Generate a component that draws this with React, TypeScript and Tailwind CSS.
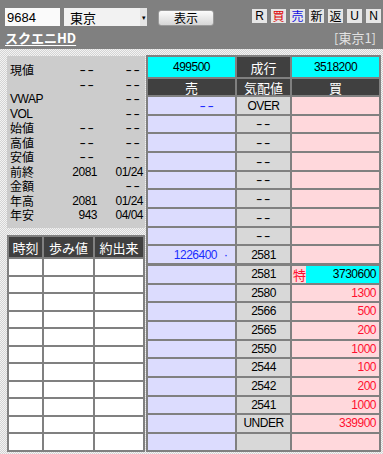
const info: [string, string, string][] = [
  ["現値", "--", "--"],
  ["", "--", "--"],
  ["VWAP", "", "--"],
  ["VOL", "", "--"],
  ["始値", "--", "--"],
  ["高値", "--", "--"],
  ["安値", "--", "--"],
  ["前終", "2081", "01/24"],
  ["金額", "", "--"],
  ["年高", "2081", "01/24"],
  ["年安", "943", "04/04"],
];

type Row = { sell?: string; mark?: boolean; price?: string; buy?: string; special?: boolean };

const book: Row[] = [
  { sell: "--", price: "OVER" },
  { price: "--" },
  { price: "--" },
  { price: "--" },
  { price: "--" },
  { price: "--" },
  { price: "--" },
  { price: "--" },
  { sell: "1226400", mark: true, price: "2581" },
  { price: "2581", buy: "3730600", special: true },
  { price: "2580", buy: "1300" },
  { price: "2566", buy: "500" },
  { price: "2565", buy: "200" },
  { price: "2550", buy: "1000" },
  { price: "2544", buy: "100" },
  { price: "2542", buy: "200" },
  { price: "2541", buy: "1000" },
  { price: "UNDER", buy: "339900" },
  {},
];

const jp = "font-['Noto_Sans_CJK_JP',sans-serif]";

function Val({ v, right }: { v: string; right?: boolean }) {
  if (v === "--") {
    return (
      <span
        className={`inline-block scale-x-[1.6] tracking-[1px] ${right ? "origin-right pr-[1px]" : "origin-center"}`}
      >
        --
      </span>
    );
  }
  return <span className="tracking-[-0.5px]">{v}</span>;
}

export default function App() {
  return (
    <div className="h-[454px] w-[383px] overflow-hidden bg-[repeating-conic-gradient(#d4d4d4_0%_25%,#f3f3f3_0%_50%)] bg-size-[2px_2px] font-['Liberation_Sans','Noto_Sans_CJK_JP',sans-serif] text-[12px] leading-none text-black">
      <header className="h-[49px] bg-[#808080] pl-[5px] pr-[2px] pt-[8px]">
        <div className="flex items-start">
          <div className="flex h-[18px] w-[55px] items-center bg-[#fafafa] pl-[2px] text-[13px]">9684</div>
          <div className="ml-[4px] flex h-[18px] w-[83px] items-center bg-[#f2f2f2]">
            <span className={`${jp} flex-1 pl-[6px] text-[13px] leading-none`}>東京</span>
            <span className="flex h-[18px] w-[7px] items-center justify-center bg-[#e4e4e4] text-[7px] leading-none">▾</span>
          </div>
          <button className={`${jp} ml-[11px] mt-[2px] h-[16px] w-[56px] rounded-[3px] border border-[#9a9a9a] bg-linear-to-b from-[#fcfcfc] to-[#d6d6d6] text-[12px] leading-none`}>
            表示
          </button>
          <div className={`${jp} ml-auto mt-[1px] flex gap-[4px] text-[12px] leading-none`}>
            {[
              ["R", "text-black font-['Liberation_Sans',sans-serif]"],
              ["買", "text-[#e00000]"],
              ["売", "text-[#1010e0]"],
              ["新", "text-black"],
              ["返", "text-black"],
              ["U", "text-black font-['Liberation_Sans',sans-serif]"],
              ["N", "text-black font-['Liberation_Sans',sans-serif]"],
            ].map(([t, c]) => (
              <span key={t} className={`flex h-[14px] w-[15px] items-center justify-center bg-[#e6e6e6] ${c}`}>
                {t}
              </span>
            ))}
          </div>
        </div>
        <div className="mt-[4px] flex items-center leading-[16px]">
          <a className={`${jp} text-[13px] font-bold text-white underline underline-offset-2`}>スクエニHD</a>
          <span className={`${jp} ml-auto mr-[5px] text-[13px] text-[#e2e2e2]`}>[東京1]</span>
        </div>
      </header>

      <main className="flex pl-[7px] pt-[6px]">
        <div className="flex w-[138px] flex-col">
          <div className="mt-[1px] h-[172px] bg-[#cccccc] pl-[3px] pr-[2px] pt-[7px]">
            {info.map(([label, mid, right], i) => (
              <div key={i} className="flex h-[14.5px] items-center leading-none">
                <span className={`w-[40px] ${label.match(/[A-Z]/) ? "tracking-[-0.5px]" : jp}`}>{label}</span>
                <span className="flex-1 text-right">{mid && <Val v={mid} right />}</span>
                <span className="w-[46px] text-right">{right && <Val v={right} right />}</span>
              </div>
            ))}
          </div>

          <div className="mt-[7px] grid grid-cols-[33px_49px_48px] gap-[2px] bg-[#808080] p-[2px]">
            {["時刻", "歩み値", "約出来"].map((h) => (
              <div key={h} className={`${jp} flex h-[20px] items-center justify-center bg-[#404040] text-[13px] text-white`}>
                {h}
              </div>
            ))}
            {Array.from({ length: 33 }).map((_, i) => (
              <div key={i} className={`bg-white ${Math.floor(i / 3) % 2 === 0 ? "h-[16px]" : "h-[15px]"}`} />
            ))}
          </div>
        </div>

        <div className="ml-[1px] grid w-[235px] grid-cols-[87px_53px_87px] gap-[2px] bg-[#808080] p-[2px]">
          <div className="flex h-[20px] items-center justify-center bg-[#00ffff] tracking-[-0.5px]">499500</div>
          <div className={`${jp} flex h-[20px] items-center justify-center bg-[#404040] text-[13px] text-white`}>成行</div>
          <div className="flex h-[20px] items-center justify-center bg-[#00ffff] tracking-[-0.5px]">3518200</div>

          <div className={`${jp} flex h-[16px] items-center justify-center bg-[#404040] text-[13px] text-white`}>売</div>
          <div className={`${jp} flex h-[16px] items-center justify-center bg-[#404040] text-[13px] text-white`}>気配値</div>
          <div className={`${jp} flex h-[16px] items-center justify-center bg-[#404040] text-[13px] text-white`}>買</div>

          {book.map((r, i) => {
            const h = i % 3 === 1 || i === 18 ? "h-[16px]" : "h-[17px]";
            return (
              <div key={i} className="contents">
                <div className={`flex ${h} items-center justify-end bg-[#dcdcfe] text-[#1a2cff]`}>
                  {r.sell && <Val v={r.sell} right />}
                  <span className="flex w-[18px] justify-center text-[13px] leading-none">{r.mark ? "·" : ""}</span>
                </div>
                <div className={`flex ${h} items-center justify-center bg-[#d8d8d8]`}>
                  {r.price && <Val v={r.price} />}
                </div>
                <div className={`flex ${h} items-center bg-[#ffd8dc] text-[#ff1030]`}>
                  {r.special ? (
                    <>
                      <span className={`${jp} w-[14px] pl-[1px] text-[13px] leading-none`}>特</span>
                      <span className="flex h-full flex-1 items-center justify-end bg-[#00ffff] pr-[3px] text-black tracking-[-0.5px]">
                        {r.buy}
                      </span>
                    </>
                  ) : (
                    <span className="flex-1 pr-[3px] text-right tracking-[-0.5px]">{r.buy}</span>
                  )}
                </div>
              </div>
            );
          })}
        </div>
      </main>
    </div>
  );
}
